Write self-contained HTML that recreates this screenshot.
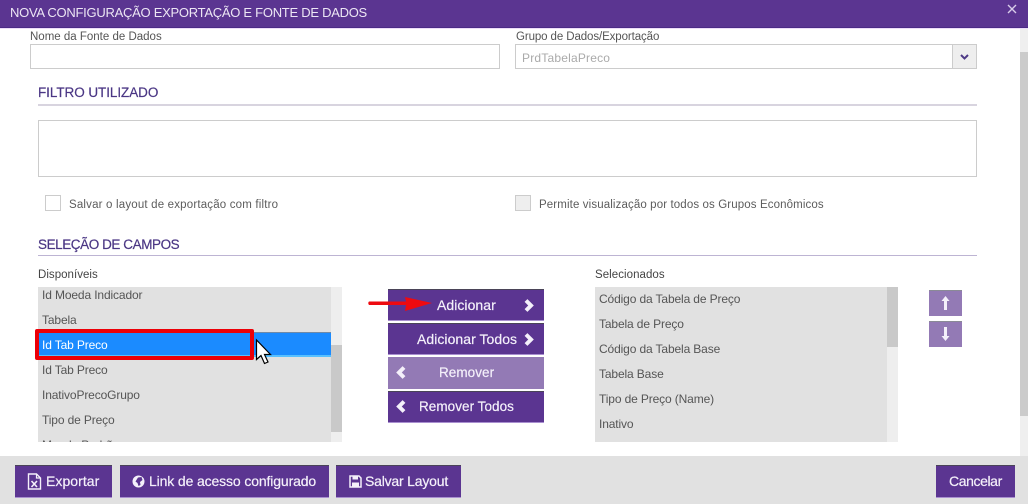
<!DOCTYPE html>
<html lang="pt"><head><meta charset="utf-8">
<style>
html,body{margin:0;padding:0;width:1028px;height:504px;overflow:hidden;background:#fff}
body{position:relative;font-family:"Liberation Sans",sans-serif;color:#555}
.a{position:absolute;box-sizing:border-box}
.t{position:absolute;white-space:nowrap;line-height:16px;height:16px}
.h{color:#4a3684;font-size:13.5px;-webkit-text-stroke:.2px #4a3684}
.l{font-size:12px;letter-spacing:-.13px;color:#555}
.c{font-size:11.5px;color:#5c5c5c}
.lb{font-size:11.5px;color:#555}
.btn{position:absolute;box-sizing:border-box;background:#5b3591;color:#f2eef8;border-top:1px solid #4a4458;border-bottom:1px solid #a98fd0}
.bt{position:absolute;white-space:nowrap;color:#f4f0fa;font-size:14px;line-height:16px;letter-spacing:.05px;-webkit-text-stroke:.2px #f4f0fa}
svg{position:absolute;display:block}
</style></head><body>
<div class="a" style="left:0;top:0;width:1028px;height:28px;background:#5b3591;border-bottom:1px solid #4b2a86"></div>
<div class="a" style="left:0;top:28px;width:1028px;height:1px;background:#eddcf8"></div>
<div class="t" style="left:10px;top:5px;color:#ece6f4;font-size:13px;letter-spacing:-.27px">NOVA CONFIGURAÇÃO EXPORTAÇÃO E FONTE DE DADOS</div>
<svg style="left:1006px;top:3px" width="12" height="12" viewBox="0 0 12 12"><path d="M2 2L10 10M10 2L2 10" stroke="#d9cdea" stroke-width="1.4"/></svg>

<div class="a" style="left:1020px;top:29px;width:8px;height:427px;background:#efefef"></div>
<div class="a" style="left:1020px;top:52px;width:8px;height:364px;background:#cbcbcb"></div>

<div class="t lb" style="left:30px;top:29px">Nome da Fonte de Dados</div>
<div class="a" style="left:30px;top:44px;width:470px;height:25px;border:1px solid #ccc;background:#fff"></div>
<div class="t lb" style="left:516px;top:29px;letter-spacing:-.1px">Grupo de Dados/Exportação</div>
<div class="a" style="left:515px;top:44px;width:462px;height:25px;border:1px solid #ccc;background:#fff"></div>
<div class="a" style="left:952px;top:44px;width:25px;height:25px;border:1px solid #ccc;background:#eee"></div>
<div class="t" style="left:522px;top:50px;font-size:12px;letter-spacing:.2px;color:#aaa">PrdTabelaPreco</div>
<svg style="left:959px;top:53px" width="11" height="8" viewBox="0 0 11 8"><path d="M2 2L5.5 5.5L9 2" fill="none" stroke="#4e3a86" stroke-width="2"/></svg>

<div class="t h" style="left:38px;top:85px;letter-spacing:-.06px">FILTRO UTILIZADO</div>
<div class="a" style="left:38px;top:104px;width:939px;height:2px;background:#d8d4df"></div>
<div class="a" style="left:38px;top:120px;width:939px;height:57px;border:1px solid #ccc;background:#fff"></div>

<div class="a" style="left:45px;top:195px;width:16px;height:16px;border:1px solid #ccc;background:#fff"></div>
<div class="t c" style="left:69px;top:197px;letter-spacing:.18px">Salvar o layout de exportação com filtro</div>
<div class="a" style="left:515px;top:195px;width:16px;height:16px;border:1px solid #ccc;background:#eee"></div>
<div class="t c" style="left:539px;top:197px;letter-spacing:.12px">Permite visualização por todos os Grupos Econômicos</div>

<div class="t h" style="left:38px;top:237px;letter-spacing:-.43px">SELEÇÃO DE CAMPOS</div>
<div class="a" style="left:38px;top:255px;width:939px;height:1px;background:#bdb4d3"></div>

<div class="t" style="left:38px;top:267px;letter-spacing:.03px;font-size:11.5px;color:#444">Disponíveis</div>
<div class="a" style="left:38px;top:287px;width:304px;height:155px;background:#e1e1e1;overflow:hidden">
 <div class="a" style="left:293px;top:0;width:11px;height:155px;background:#eee"></div>
 <div class="a" style="left:293px;top:58px;width:11px;height:87px;background:#c9c9c9"></div>
 <div class="a" style="left:0;top:45px;width:293px;height:25px;background:#1b8bff;border-top:1px solid #6f8aa8;border-bottom:2px solid #57c0ff"></div>
 <div class="t l" style="left:4px;top:0">Id Moeda Indicador</div>
 <div class="t l" style="left:4px;top:25px">Tabela</div>
 <div class="t l" style="left:4px;top:50px;color:#fff">Id Tab Preco</div>
 <div class="t l" style="left:4px;top:75px">Id Tab Preco</div>
 <div class="t l" style="left:4px;top:100px">InativoPrecoGrupo</div>
 <div class="t l" style="left:4px;top:125px">Tipo de Preço</div>
 <div class="t l" style="left:4px;top:150px">Moeda Padrão</div>
</div>
<div class="a" style="left:35px;top:329px;width:219px;height:31px;border:4px solid #ec0008;border-radius:2px"></div>
<svg style="left:254px;top:338px" width="20" height="30" viewBox="0 0 20 30"><path d="M2.5 2V21.5L7 17.5L10.5 25.5L14 24L10.5 16.5H16.5Z" fill="#fff" stroke="#000" stroke-width="1.2"/></svg>

<div class="btn" style="left:388px;top:289px;width:156px;height:32px"></div>
<div class="bt" style="left:437px;top:297px">Adicionar</div>
<svg style="left:523px;top:298px" width="13" height="15" viewBox="0 0 13 15"><path d="M3 2.500L8 7.500L3 12.500" fill="none" stroke="#f4f0fa" stroke-width="4"/></svg>
<div class="btn" style="left:388px;top:323px;width:156px;height:32px"></div>
<div class="bt" style="left:417px;top:331px">Adicionar Todos</div>
<svg style="left:523px;top:332px" width="13" height="15" viewBox="0 0 13 15"><path d="M3 2.500L8 7.500L3 12.500" fill="none" stroke="#f4f0fa" stroke-width="4"/></svg>
<div class="a" style="left:388px;top:357px;width:156px;height:32px;background:#937ab5"></div>
<div class="bt" style="left:439px;top:365px;font-size:13.5px">Remover</div>
<svg style="left:394px;top:365px" width="13" height="15" viewBox="0 0 13 15"><path d="M10 2.500L5 7.500L10 12.500" fill="none" stroke="#f4f0fa" stroke-width="4"/></svg>
<div class="btn" style="left:388px;top:391px;width:156px;height:32px"></div>
<div class="bt" style="left:419px;top:399px;font-size:13.5px">Remover Todos</div>
<svg style="left:394px;top:399px" width="13" height="15" viewBox="0 0 13 15"><path d="M10 2.500L5 7.500L10 12.500" fill="none" stroke="#f4f0fa" stroke-width="4"/></svg>
<svg style="left:366px;top:295px" width="70" height="18" viewBox="0 0 70 18"><path d="M3 6.500H40L39 2L66 8L39 16L40 10H3Q1.500 8 3 6.500Z" fill="#ee0a10"/></svg>

<div class="t" style="left:595px;top:267px;letter-spacing:.05px;font-size:11.5px;color:#444">Selecionados</div>
<div class="a" style="left:595px;top:287px;width:303px;height:155px;background:#e1e1e1;overflow:hidden">
 <div class="a" style="left:292px;top:0;width:11px;height:155px;background:#eee"></div>
 <div class="a" style="left:292px;top:0;width:11px;height:60px;background:#c9c9c9"></div>
 <div class="t l" style="left:4px;top:4px">Código da Tabela de Preço</div>
 <div class="t l" style="left:4px;top:29px">Tabela de Preço</div>
 <div class="t l" style="left:4px;top:54px">Código da Tabela Base</div>
 <div class="t l" style="left:4px;top:79px">Tabela Base</div>
 <div class="t l" style="left:4px;top:104px">Tipo de Preço (Name)</div>
 <div class="t l" style="left:4px;top:129px">Inativo</div>
</div>
<div class="a" style="left:929px;top:290px;width:33px;height:26px;background:#937ab5;border-top:1px solid #8a8a96"></div>
<svg style="left:939px;top:295px" width="13" height="16" viewBox="0 0 13 16"><path d="M6.500 1L10.500 6H8V15H5V6H2.500Z" fill="#f4f0fa"/></svg>
<div class="a" style="left:929px;top:321px;width:33px;height:26px;background:#937ab5;border-top:1px solid #8a8a96"></div>
<svg style="left:939px;top:326px" width="13" height="16" viewBox="0 0 13 16"><path d="M6.500 15L10.500 10H8V1H5V10H2.500Z" fill="#f4f0fa"/></svg>

<div class="a" style="left:0;top:456px;width:1028px;height:48px;background:#e1e1e1"></div>
<div class="btn" style="left:15px;top:465px;width:97px;height:33px"></div>
<svg style="left:27px;top:473px" width="15" height="17" viewBox="0 0 15 17"><path d="M1.500 1H9.500L13.500 5V16H1.500Z" fill="none" stroke="#f4f0fa" stroke-width="1.400"/><path d="M9.500 1V5H13.500" fill="none" stroke="#f4f0fa" stroke-width="1.200"/><path d="M4.500 8L10 14M10 8L4.500 14" stroke="#f4f0fa" stroke-width="1.600"/></svg>
<div class="bt" style="left:46px;top:473px">Exportar</div>
<div class="btn" style="left:120px;top:465px;width:209px;height:33px"></div>
<svg style="left:132px;top:475px" width="13" height="13" viewBox="0 0 13 13"><circle cx="6.500" cy="6.500" r="6" fill="#f4f0fa"/><path d="M6 2.500L9.500 2L10.500 5L8 7L8.500 10L6.500 11L5.500 8L3.500 6.500Z" fill="#5b3591"/></svg>
<div class="bt" style="left:149px;top:473px;letter-spacing:-.13px">Link de acesso configurado</div>
<div class="btn" style="left:336px;top:465px;width:125px;height:33px"></div>
<svg style="left:349px;top:475px" width="13" height="13" viewBox="0 0 13 13"><path d="M1 1H10L12 3V12H1Z" fill="none" stroke="#f4f0fa" stroke-width="1.500"/><path d="M3.500 1.500H9V4.500H3.500ZM3 7.500H10V11.500H3Z" fill="#f4f0fa"/></svg>
<div class="bt" style="left:365px;top:473px;letter-spacing:-.2px">Salvar Layout</div>
<div class="btn" style="left:936px;top:465px;width:79px;height:33px"></div>
<div class="bt" style="left:949px;top:473px;letter-spacing:-.4px">Cancelar</div>
</body></html>
